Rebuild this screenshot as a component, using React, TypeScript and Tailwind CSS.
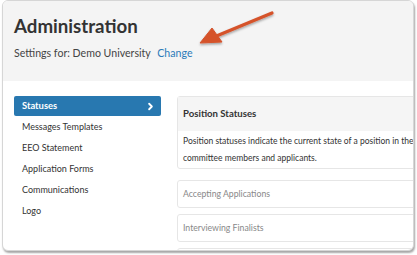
import { ChevronRight } from "lucide-react";

const menu = ["Statuses", "Messages Templates", "EEO Statement", "Application Forms", "Communications", "Logo"];

export default function App() {
  return (
    <div className="relative w-[417px] h-[255px] bg-white" style={{ fontFamily: "Lato, 'Open Sans', sans-serif" }}>
      <div className="ml-[2px] w-[412px] h-[251px] rounded-[6px] border border-[#d6d6d6] overflow-hidden bg-white shadow-[1px_2px_2px_rgba(0,0,0,0.35)]">
        {/* Header */}
        <div className="h-[80px] bg-[#f4f4f4] px-[11px] pt-[13px]">
          <h1 className="text-[18.7px] leading-[24px] font-bold text-[#333]">Administration</h1>
          <div className="mt-[8px] text-[10.6px] leading-[14px] text-[#444]">
            Settings for: Demo University <span className="ml-[4px] text-[#2b7bb9]">Change</span>
          </div>
        </div>

        {/* Body */}
        <div className="flex gap-[16px] pl-[11px] pt-[15px]">
          <div className="w-[147px] shrink-0">
            {menu.map((m, i) =>
              i === 0 ? (
                <div key={m} className="flex items-center justify-between h-[20px] rounded-[2px] bg-[#2878b0] pl-[8px] pr-[5px] text-[9.4px] font-bold text-white">
                  {m}
                  <ChevronRight size={11} strokeWidth={4} />
                </div>
              ) : (
                <div key={m} className="flex items-center h-[21px] pl-[8px] text-[9px] text-[#333]">
                  {m}
                </div>
              )
            )}
          </div>

          <div className="w-[300px] shrink-0 flex flex-col gap-[6px]">
            <div className="rounded-[3px] border border-[#e6e6e6] mb-[5px]">
              <div className="h-[34px] bg-[#f5f5f5] flex items-center px-[5px] text-[9.6px] font-bold text-[#333]">Position Statuses</div>
              <div className="px-[5px] pt-[2px] pb-[1px] text-[8.5px] leading-[17px] text-[#333] whitespace-nowrap">
                Position statuses indicate the current state of a position in the
                <br />
                committee members and applicants.
              </div>
            </div>
            <div className="h-[28px] rounded-[3px] border border-[#e6e6e6] flex items-center px-[5px] text-[8.7px] text-[#888]">Accepting Applications</div>
            <div className="h-[28px] rounded-[3px] border border-[#e6e6e6] flex items-center px-[5px] text-[8.7px] text-[#888]">Interviewing Finalists</div>
            <div className="h-[28px] rounded-[3px] border border-[#e6e6e6]"></div>
          </div>
        </div>
      </div>

      {/* Annotation arrow */}
      <svg className="absolute left-0 top-0 pointer-events-none" width="417" height="255" viewBox="0 0 417 255">
        <defs>
          <filter id="sh" x="-20%" y="-20%" width="140%" height="140%">
            <feDropShadow dx="0" dy="1.5" stdDeviation="1" floodColor="#000" floodOpacity="0.35" />
          </filter>
        </defs>
        <g filter="url(#sh)" fill="#d5532b" stroke="#d5532b">
          <line x1="272" y1="13" x2="214" y2="37" strokeWidth="3.2" strokeLinecap="round" />
          <polygon points="200,43 212,28 222,42" strokeWidth="1" strokeLinejoin="round" />
        </g>
      </svg>
    </div>
  );
}
